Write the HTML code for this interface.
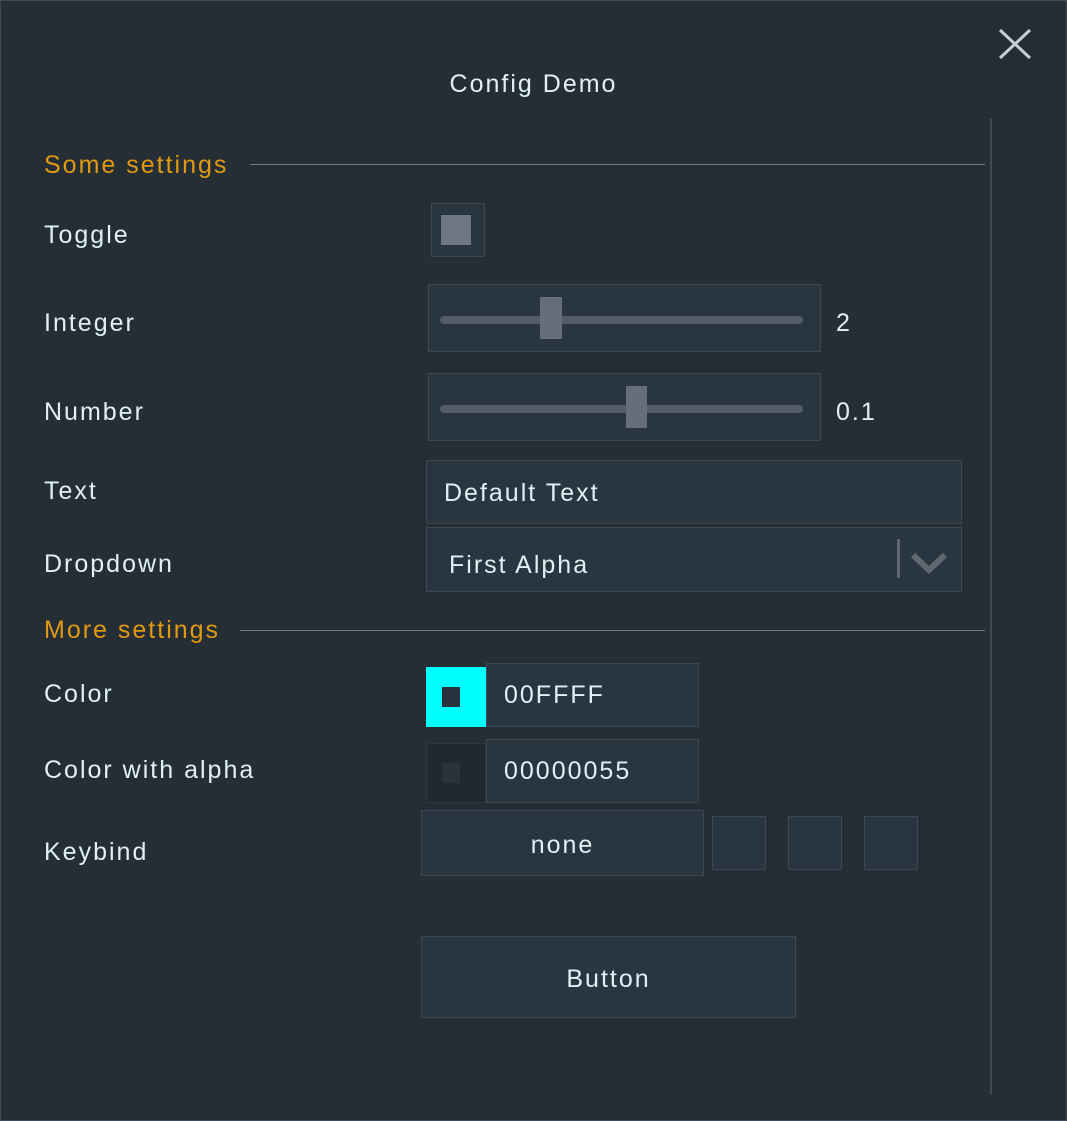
<!DOCTYPE html>
<html><head><meta charset="utf-8"><style>
*{margin:0;padding:0;box-sizing:border-box}
body{width:1067px;height:1121px;background:#252d35;overflow:hidden;position:relative;font-family:"Liberation Sans",sans-serif;color:#dff1f6}
.frame{position:absolute;left:0;top:0;width:1067px;height:1121px;border:1px solid #3d4a5c}
.t{position:absolute;height:30px;line-height:30px;font-size:25px;white-space:nowrap;letter-spacing:2px;margin-top:2px}
.h{color:#e09a10}
.b{position:absolute;background:#29353f;border:1px solid #3b4753}
.ln{position:absolute;background:#6f7f86;height:1px}
.trk{position:absolute;height:8px;border-radius:4px;background:#535c68}
.th{position:absolute;background:#666d7b}
</style></head><body>
<div class="frame"></div>
<div class="t" style="left:0;width:1067px;text-align:center;top:67px;">Config Demo</div>
<svg style="position:absolute;left:998px;top:28px" width="34" height="32"><path d="M2 2L32 30M32 2L2 30" stroke="#c5d0d2" stroke-width="3"/></svg>
<div style="position:absolute;left:990px;top:119px;width:2px;height:976px;background:#3f4a55"></div>

<div class="t h" style="left:44px;top:148px">Some settings</div>
<div class="ln" style="left:250px;top:164px;width:735px"></div>
<div class="t" style="left:44px;top:218px">Toggle</div>
<div class="t" style="left:44px;top:306px">Integer</div>
<div class="t" style="left:44px;top:395px">Number</div>
<div class="t" style="left:44px;top:474px">Text</div>
<div class="t" style="left:44px;top:547px">Dropdown</div>

<div class="b" style="left:431px;top:203px;width:54px;height:54px"></div>
<div class="th" style="left:441px;top:215px;width:30px;height:30px;background:#6e7585"></div>

<div class="b" style="left:428px;top:284px;width:393px;height:68px"></div>
<div class="trk" style="left:440px;top:316px;width:363px"></div>
<div class="th" style="left:540px;top:297px;width:22px;height:42px"></div>
<div class="t" style="left:836px;top:306px">2</div>

<div class="b" style="left:428px;top:373px;width:393px;height:68px"></div>
<div class="trk" style="left:440px;top:405px;width:363px"></div>
<div class="th" style="left:626px;top:386px;width:21px;height:42px"></div>
<div class="t" style="left:836px;top:395px">0.1</div>

<div class="b" style="left:426px;top:460px;width:536px;height:64px"></div>
<div class="t" style="left:444px;top:476px">Default Text</div>
<div class="b" style="left:426px;top:527px;width:536px;height:65px"></div>
<div class="t" style="left:449px;top:548px">First Alpha</div>
<div style="position:absolute;left:897px;top:539px;width:3px;height:39px;background:#5f6670"></div>
<svg style="position:absolute;left:910px;top:550px" width="38" height="26"><path d="M3 5L19 20L35 5" stroke="#5f6670" stroke-width="6" fill="none"/></svg>

<div class="t h" style="left:44px;top:613px">More settings</div>
<div class="ln" style="left:240px;top:630px;width:745px"></div>
<div class="t" style="left:44px;top:677px">Color</div>
<div class="t" style="left:44px;top:753px">Color with alpha</div>
<div class="t" style="left:44px;top:835px">Keybind</div>

<div style="position:absolute;left:426px;top:667px;width:60px;height:60px;background:#00ffff"></div>
<div style="position:absolute;left:442px;top:687px;width:18px;height:20px;background:#27323c"></div>
<div class="b" style="left:486px;top:663px;width:213px;height:64px"></div>
<div class="t" style="left:504px;top:678px">00FFFF</div>

<div style="position:absolute;left:426px;top:743px;width:60px;height:60px;background:#212930;border:1px solid #2d3640"></div>
<div style="position:absolute;left:442px;top:763px;width:18px;height:20px;background:#29333c"></div>
<div class="b" style="left:486px;top:739px;width:213px;height:64px"></div>
<div class="t" style="left:504px;top:754px">00000055</div>

<div class="b" style="left:421px;top:810px;width:283px;height:66px"></div>
<div class="t" style="left:421px;width:283px;text-align:center;top:828px">none</div>
<div class="b" style="left:712px;top:816px;width:54px;height:54px"></div>
<div class="b" style="left:788px;top:816px;width:54px;height:54px"></div>
<div class="b" style="left:864px;top:816px;width:54px;height:54px"></div>

<div class="b" style="left:421px;top:936px;width:375px;height:82px"></div>
<div class="t" style="left:421px;width:375px;text-align:center;top:962px">Button</div>
</body></html>
